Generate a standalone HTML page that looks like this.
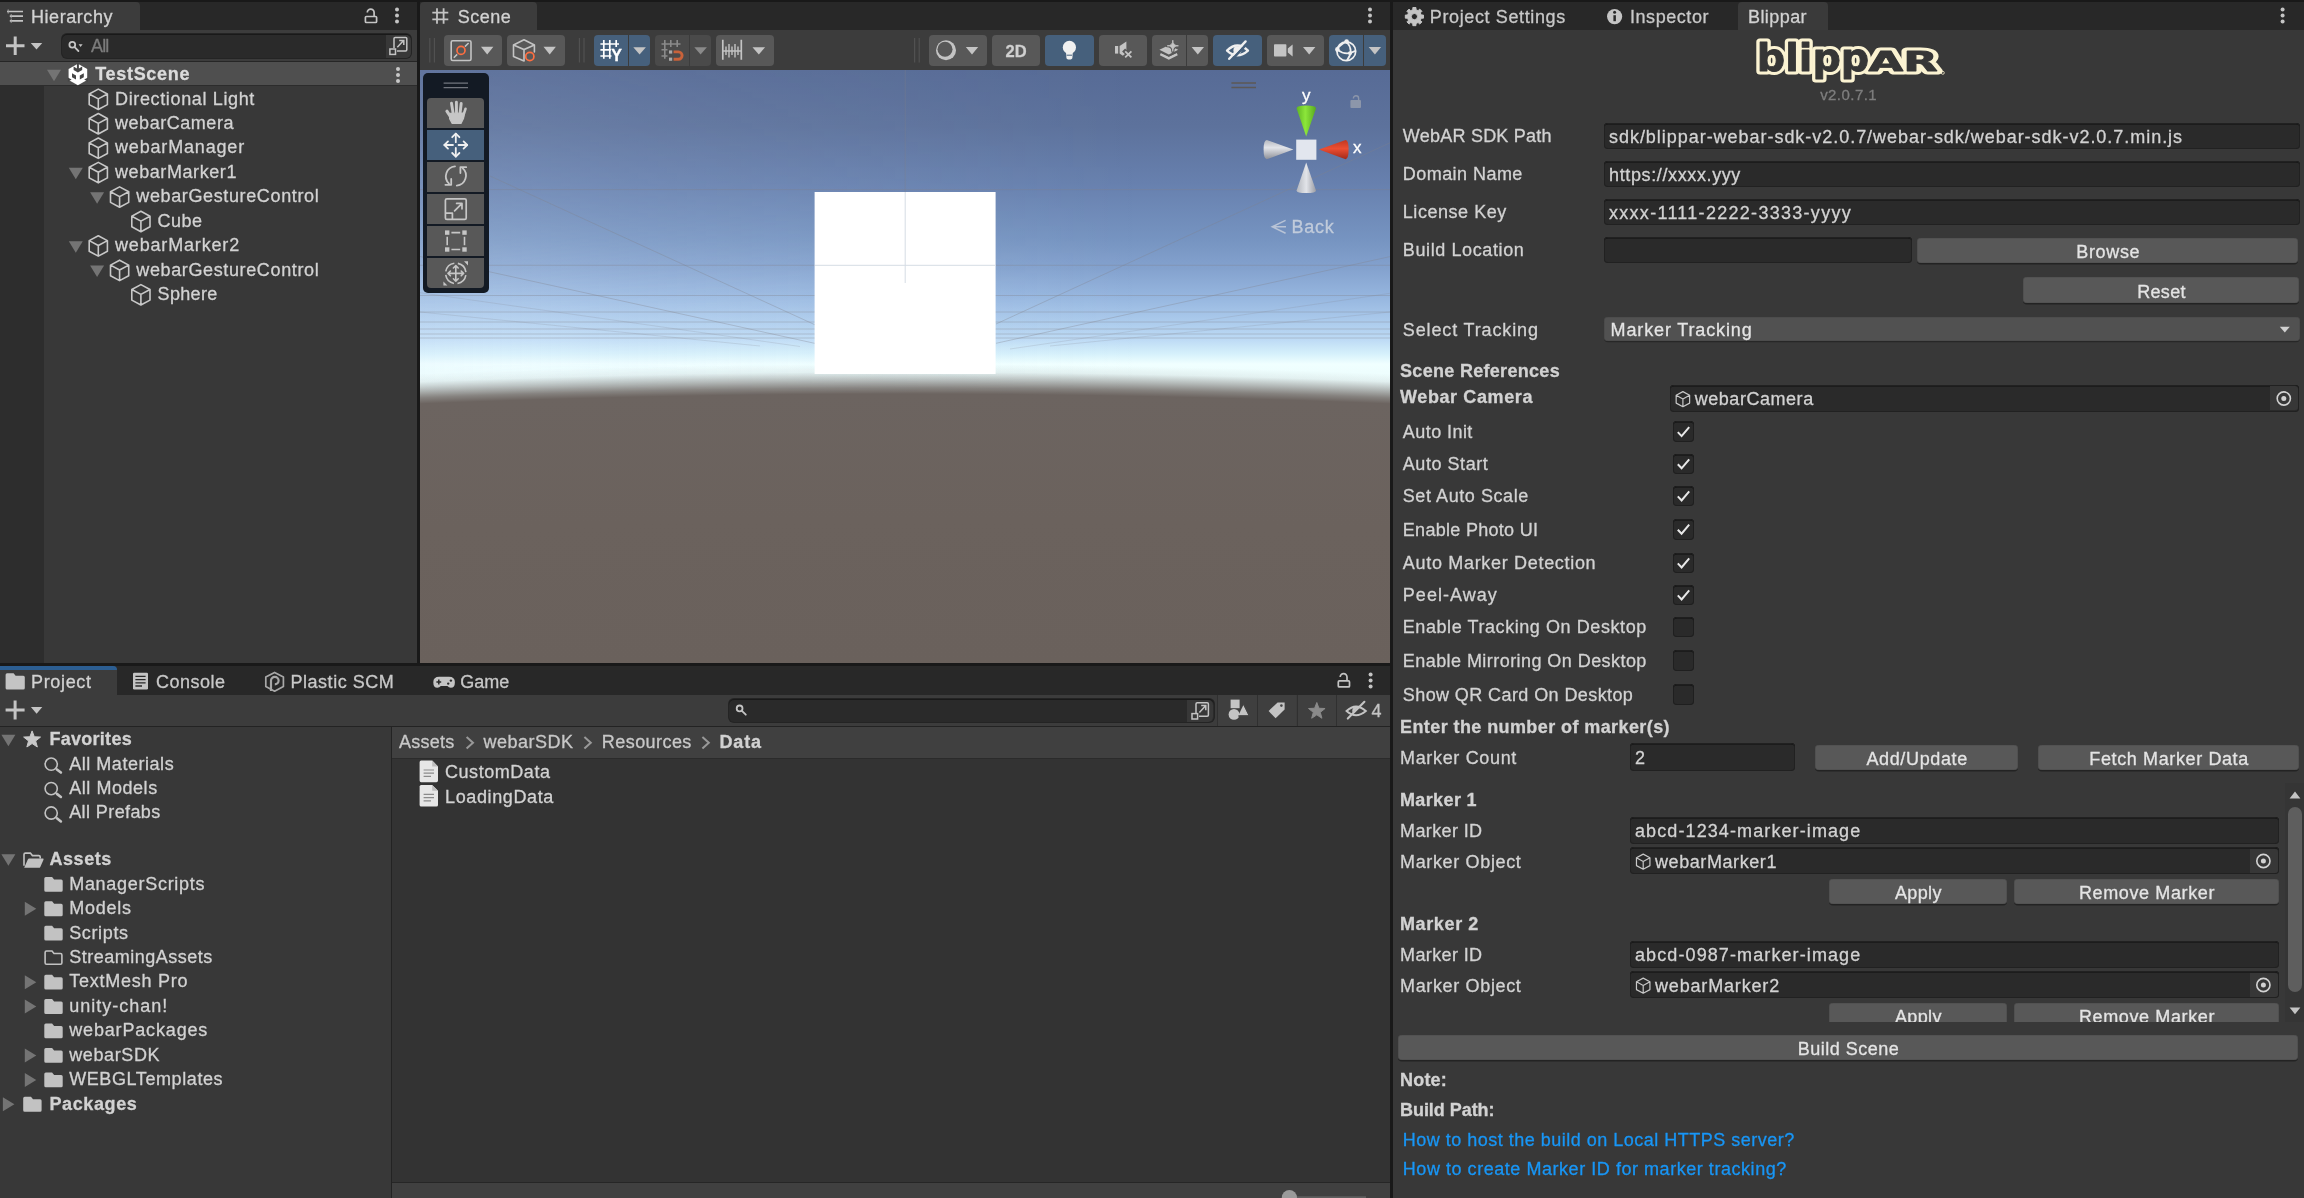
<!DOCTYPE html>
<html lang="en"><head><meta charset="utf-8"><title>Unity - Blippar WebAR SDK</title>
<style>
html,body{margin:0;padding:0}
body{width:2304px;height:1198px;overflow:hidden;background:#191919;position:relative;
 font-family:"Liberation Sans",sans-serif;font-size:18px;color:#D2D2D2;}
div,span,svg{position:absolute}
#L{left:0;top:0;width:2304px;height:1198px;will-change:transform}
span{white-space:pre;line-height:24px;height:24px;-webkit-text-stroke:0.3px currentColor}
#sky{background:radial-gradient(circle at 485px 12324px,rgba(106,97,92,1) 11731.0px,rgba(107,98,93,1) 11874.0px,rgba(108,100,96,1) 12000.0px,rgba(108,100,96,.80) 12006.0px,rgba(108,101,98,.46) 12013.5px,rgba(110,104,102,.09) 12022.0px,rgba(110,104,102,0) 12030.0px),linear-gradient(180deg,#576B96 0px,#5D729C 57px,#6780AE 113px,#7694C1 170px,#84A2CE 199px,#96B6DF 227px,#AFCEEE 255px,#BEDBF5 270px,#D6F1FB 284px,#F0FFFF 294px,#EEFEFE 302px,#EAFAFA 350px);}
svg{left:0;top:0;width:2304px;height:1198px;overflow:visible}
svg text{font-family:"Liberation Sans",sans-serif}
svg text.lg{font-family:"DejaVu Sans","Liberation Sans",sans-serif;font-weight:bold}
</style></head>
<body>
<div id="L">
<div style="left:0px;top:2px;width:417px;height:28px;background:#282828;"></div>
<div style="left:0px;top:2px;width:140px;height:28px;background:#3C3C3C;border-radius:0 4px 0 0;"></div>
<div style="left:0px;top:30px;width:417px;height:31px;background:#3C3C3C;"></div>
<div style="left:0px;top:61px;width:417px;height:1px;background:#262626;"></div>
<div style="left:0px;top:62px;width:417px;height:601px;background:#383838;"></div>
<div style="left:0px;top:62px;width:417px;height:23px;background:#4F4F4F;"></div>
<div style="left:0px;top:85px;width:417px;height:1px;background:#2C2C2C;"></div>
<div style="left:0px;top:86px;width:44px;height:577px;background:#2D2D2D;"></div>
<span style="left:31.00px;top:5.30px;letter-spacing:0.554px;">Hierarchy</span>
<div style="left:61.5px;top:34px;width:349.5px;height:23.5px;background:#2A2A2A;border-radius:5px;box-shadow:inset 0 1px 0 #191919, 0 0 0 1px #242424;"></div>
<div style="left:385.5px;top:35px;width:25.5px;height:22.5px;background:#383838;border-radius:0 5px 5px 0;"></div>
<span style="left:91.00px;top:34.20px;letter-spacing:-0.834px;color:#7C7C7C;">All</span>
<span style="left:95.20px;top:61.90px;letter-spacing:0.699px;font-weight:bold;color:#DCDCDC;">TestScene</span>
<span style="left:115.00px;top:86.50px;letter-spacing:0.643px;">Directional Light</span>
<span style="left:115.00px;top:110.94px;letter-spacing:0.541px;">webarCamera</span>
<span style="left:115.00px;top:135.38px;letter-spacing:0.828px;">webarManager</span>
<span style="left:115.00px;top:159.82px;letter-spacing:0.580px;">webarMarker1</span>
<span style="left:136.30px;top:184.26px;letter-spacing:0.627px;">webarGestureControl</span>
<span style="left:157.60px;top:208.70px;letter-spacing:0.492px;">Cube</span>
<span style="left:115.00px;top:233.14px;letter-spacing:0.830px;">webarMarker2</span>
<span style="left:136.30px;top:257.58px;letter-spacing:0.627px;">webarGestureControl</span>
<span style="left:157.60px;top:282.02px;letter-spacing:0.326px;">Sphere</span>
<div style="left:420px;top:2px;width:970px;height:28px;background:#282828;"></div>
<div style="left:420px;top:2px;width:117px;height:28px;background:#3C3C3C;border-radius:4px 4px 0 0;"></div>
<div style="left:420px;top:30px;width:970px;height:40px;background:#3C3C3C;"></div>
<span style="left:457.70px;top:5.30px;letter-spacing:0.492px;">Scene</span>
<div style="left:444.2px;top:35px;width:57.80000000000001px;height:30.5px;background:#585858;border-radius:4px;"></div>
<div style="left:507px;top:35px;width:58px;height:30.5px;background:#585858;border-radius:4px;"></div>
<div style="left:594px;top:35px;width:33.60000000000002px;height:30.5px;background:#46607C;border-radius:4px 0 0 4px;"></div>
<div style="left:629px;top:35px;width:21.399999999999977px;height:30.5px;background:#46607C;border-radius:0 4px 4px 0;"></div>
<span style="left:611.26px;top:43.50px;letter-spacing:0.000px;font-weight:bold;color:#FFFFFF;font-size:16px;">Y</span>
<div style="left:654.9px;top:35px;width:33.80000000000007px;height:30.5px;background:#4A4A4A;border-radius:4px 0 0 4px;"></div>
<div style="left:690px;top:35px;width:21.299999999999955px;height:30.5px;background:#4A4A4A;border-radius:0 4px 4px 0;"></div>
<div style="left:716px;top:35px;width:58px;height:30.5px;background:#585858;border-radius:4px;"></div>
<div style="left:929px;top:35px;width:58px;height:30.5px;background:#585858;border-radius:4px;"></div>
<div style="left:991.8px;top:35px;width:48.600000000000136px;height:30.5px;background:#585858;border-radius:4px;"></div>
<span style="left:1005.40px;top:39.30px;letter-spacing:0.100px;font-weight:bold;color:#D0D0D0;font-size:16.5px;">2D</span>
<div style="left:1045px;top:35px;width:49px;height:30.5px;background:#46607C;border-radius:4px;"></div>
<div style="left:1098.7px;top:35px;width:48.5px;height:30.5px;background:#585858;border-radius:4px;"></div>
<div style="left:1152px;top:35px;width:33.700000000000045px;height:30.5px;background:#585858;border-radius:4px 0 0 4px;"></div>
<div style="left:1187px;top:35px;width:21.200000000000045px;height:30.5px;background:#585858;border-radius:0 4px 4px 0;"></div>
<div style="left:1213px;top:35px;width:49px;height:30.5px;background:#46607C;border-radius:4px;"></div>
<div style="left:1266.5px;top:35px;width:57.90000000000009px;height:30.5px;background:#585858;border-radius:4px;"></div>
<div style="left:1329px;top:35px;width:33.59999999999991px;height:30.5px;background:#46607C;border-radius:4px 0 0 4px;"></div>
<div style="left:1364px;top:35px;width:21.700000000000045px;height:30.5px;background:#46607C;border-radius:0 4px 4px 0;"></div>
<div id="sky" style="left:420px;top:70px;width:970px;height:593px;"></div>
<div style="left:420px;top:70px;width:970px;height:325px;background:linear-gradient(90deg,rgba(228,242,255,.26) 0,rgba(228,242,255,.14) 30%,rgba(228,242,255,0) 74%);-webkit-mask-image:linear-gradient(180deg,rgba(0,0,0,.3) 0,rgba(0,0,0,.6) 45%,#000 75%,#000 90%,transparent 100%);mask-image:linear-gradient(180deg,rgba(0,0,0,.3) 0,rgba(0,0,0,.6) 45%,#000 75%,#000 90%,transparent 100%);"></div>
<svg viewBox="0 0 2304 1198" width="2304" height="1198"><g stroke="#80828A" stroke-opacity="0.34" stroke-width="1" fill="none"><path d="M905.2 70V283"/><path d="M420 189.6H1390"/><path d="M420 265.3H1390"/><path d="M420 295.5H1390"/><path d="M420 312H1390"/><path d="M420 322H1390"/><path d="M420 329H1390"/><path d="M420 334H1390"/><path d="M420 338H1390"/><path d="M490 176L815 324.8M1390 142.8L996 324M420 256.5L815 343.4M1390 256.6L996 343.3"/><path d="M420 292.7L800 346.5M1390 293.3L1010 349M420 312L760 346M1390 312L1050 346" stroke-opacity=".2"/></g><rect x="814.6" y="192" width="181" height="182" fill="#FFFFFF"/><path d="M905.2 192V283M815 265.3H996" stroke="#D5DCE4" stroke-width="1"/></svg>
<div style="left:423px;top:73px;width:66px;height:220px;background:#131A24;border-radius:5px;"></div>
<div style="left:427px;top:98px;width:57px;height:30px;background:#585858;border-radius:4px 4px 0 0;"></div>
<div style="left:427px;top:130px;width:57px;height:30px;background:#46607C;border-radius:0;"></div>
<div style="left:427px;top:162px;width:57px;height:30px;background:#585858;border-radius:0;"></div>
<div style="left:427px;top:194px;width:57px;height:30px;background:#585858;border-radius:0;"></div>
<div style="left:427px;top:226px;width:57px;height:30px;background:#585858;border-radius:0;"></div>
<div style="left:427px;top:258px;width:57px;height:30px;background:#585858;border-radius:0 0 4px 4px;"></div>
<span style="left:1301.95px;top:84.30px;letter-spacing:0.000px;color:#FFFFFF;font-size:17px;">y</span>
<span style="left:1352.95px;top:135.90px;letter-spacing:0.000px;color:#FFFFFF;font-size:17px;">x</span>
<span style="left:1291.40px;top:214.90px;letter-spacing:0.746px;color:rgba(200,208,222,.9);">Back</span>
<div style="left:1393px;top:2px;width:911px;height:28px;background:#282828;"></div>
<div style="left:1393px;top:30px;width:911px;height:1168px;background:#383838;"></div>
<div style="left:1738px;top:2px;width:90px;height:28px;background:#3A3A3A;border-radius:4px 4px 0 0;"></div>
<span style="left:1429.80px;top:5.30px;letter-spacing:0.621px;color:#C8C8C8;">Project Settings</span>
<span style="left:1630.00px;top:5.30px;letter-spacing:0.551px;color:#C8C8C8;">Inspector</span>
<span style="left:1748.00px;top:5.30px;letter-spacing:0.424px;">Blippar</span>
<span style="left:1820.13px;top:82.90px;letter-spacing:0.453px;color:#7E7E7E;font-size:15px;">v2.0.7.1</span>
<span style="left:1402.80px;top:124.10px;letter-spacing:0.233px;">WebAR SDK Path</span>
<div style="left:1604px;top:122.5px;width:695.5px;height:26.69999999999999px;background:#2A2A2A;border-radius:4px;box-shadow:inset 0 0 0 1px #212121, inset 0 1.5px 0 #0F0F0F;"></div>
<span style="left:1609.00px;top:124.55px;letter-spacing:0.965px;">sdk/blippar-webar-sdk-v2.0.7/webar-sdk/webar-sdk-v2.0.7.min.js</span>
<span style="left:1402.80px;top:162.10px;letter-spacing:0.451px;">Domain Name</span>
<div style="left:1604px;top:160.5px;width:695.5px;height:26.69999999999999px;background:#2A2A2A;border-radius:4px;box-shadow:inset 0 0 0 1px #212121, inset 0 1.5px 0 #0F0F0F;"></div>
<span style="left:1609.00px;top:162.55px;letter-spacing:0.623px;">https://xxxx.yyy</span>
<span style="left:1402.80px;top:200.10px;letter-spacing:0.540px;">License Key</span>
<div style="left:1604px;top:198.5px;width:695.5px;height:26.69999999999999px;background:#2A2A2A;border-radius:4px;box-shadow:inset 0 0 0 1px #212121, inset 0 1.5px 0 #0F0F0F;"></div>
<span style="left:1609.00px;top:200.55px;letter-spacing:1.288px;">xxxx-1111-2222-3333-yyyy</span>
<span style="left:1402.80px;top:238.30px;letter-spacing:0.608px;">Build Location</span>
<div style="left:1604px;top:236.5px;width:307.79999999999995px;height:26.69999999999999px;background:#2A2A2A;border-radius:4px;box-shadow:inset 0 0 0 1px #212121, inset 0 1.5px 0 #0F0F0F;"></div>
<div style="left:1917px;top:238px;width:381px;height:25px;background:#585858;border-radius:4px;box-shadow:0 1.5px 0 #232323, inset 0 0 0 0.6px #4C4C4C;"></div>
<span style="left:2076.23px;top:239.90px;letter-spacing:0.663px;color:#E4E4E4;">Browse</span>
<div style="left:2023px;top:277px;width:276px;height:26px;background:#585858;border-radius:4px;box-shadow:0 1.5px 0 #232323, inset 0 0 0 0.6px #4C4C4C;"></div>
<span style="left:2137.25px;top:279.75px;letter-spacing:0.296px;color:#E4E4E4;">Reset</span>
<span style="left:1402.80px;top:317.70px;letter-spacing:0.863px;">Select Tracking</span>
<div style="left:1604px;top:317px;width:696px;height:24px;background:#515151;border-radius:4px;box-shadow:0 1.3px 0 #272727, inset 0 0 0 0.6px #484848;"></div>
<span style="left:1610.60px;top:317.70px;letter-spacing:0.864px;color:#E4E4E4;">Marker Tracking</span>
<span style="left:1400.00px;top:358.90px;letter-spacing:0.307px;font-weight:bold;">Scene References</span>
<span style="left:1400.00px;top:385.10px;letter-spacing:0.606px;font-weight:bold;">Webar Camera</span>
<div style="left:1669.7px;top:384.7px;width:629.3px;height:26.899999999999977px;background:#2A2A2A;border-radius:4px;box-shadow:inset 0 0 0 1px #212121, inset 0 1.5px 0 #0F0F0F;"></div>
<span style="left:1694.70px;top:387.20px;letter-spacing:0.541px;">webarCamera</span>
<div style="left:2270px;top:386.2px;width:28px;height:24.19999999999999px;background:#373737;border-radius:0 3px 3px 0;"></div>
<span style="left:1402.80px;top:420.00px;letter-spacing:0.440px;">Auto Init</span>
<div style="left:1673.0px;top:421.3px;width:20.8px;height:20.8px;background:#2A2A2A;border-radius:4px;box-shadow:inset 0 0 0 1px #1F1F1F, inset 0 1.5px 0 #0F0F0F;"></div>
<span style="left:1402.80px;top:452.20px;letter-spacing:0.545px;">Auto Start</span>
<div style="left:1673.0px;top:453.5px;width:20.8px;height:20.8px;background:#2A2A2A;border-radius:4px;box-shadow:inset 0 0 0 1px #1F1F1F, inset 0 1.5px 0 #0F0F0F;"></div>
<span style="left:1402.80px;top:484.30px;letter-spacing:0.565px;">Set Auto Scale</span>
<div style="left:1673.0px;top:485.6px;width:20.8px;height:20.8px;background:#2A2A2A;border-radius:4px;box-shadow:inset 0 0 0 1px #1F1F1F, inset 0 1.5px 0 #0F0F0F;"></div>
<span style="left:1402.80px;top:517.60px;letter-spacing:0.294px;">Enable Photo UI</span>
<div style="left:1673.0px;top:518.9px;width:20.8px;height:20.8px;background:#2A2A2A;border-radius:4px;box-shadow:inset 0 0 0 1px #1F1F1F, inset 0 1.5px 0 #0F0F0F;"></div>
<span style="left:1402.80px;top:551.30px;letter-spacing:0.687px;">Auto Marker Detection</span>
<div style="left:1673.0px;top:552.6px;width:20.8px;height:20.8px;background:#2A2A2A;border-radius:4px;box-shadow:inset 0 0 0 1px #1F1F1F, inset 0 1.5px 0 #0F0F0F;"></div>
<span style="left:1402.80px;top:583.30px;letter-spacing:1.032px;">Peel-Away</span>
<div style="left:1673.0px;top:584.6px;width:20.8px;height:20.8px;background:#2A2A2A;border-radius:4px;box-shadow:inset 0 0 0 1px #1F1F1F, inset 0 1.5px 0 #0F0F0F;"></div>
<span style="left:1402.80px;top:615.30px;letter-spacing:0.572px;">Enable Tracking On Desktop</span>
<div style="left:1673.0px;top:616.6px;width:20.8px;height:20.8px;background:#2A2A2A;border-radius:4px;box-shadow:inset 0 0 0 1px #1F1F1F, inset 0 1.5px 0 #0F0F0F;"></div>
<span style="left:1402.80px;top:648.90px;letter-spacing:0.441px;">Enable Mirroring On Desktop</span>
<div style="left:1673.0px;top:650.2px;width:20.8px;height:20.8px;background:#2A2A2A;border-radius:4px;box-shadow:inset 0 0 0 1px #1F1F1F, inset 0 1.5px 0 #0F0F0F;"></div>
<span style="left:1402.80px;top:682.60px;letter-spacing:0.409px;">Show QR Card On Desktop</span>
<div style="left:1673.0px;top:683.9px;width:20.8px;height:20.8px;background:#2A2A2A;border-radius:4px;box-shadow:inset 0 0 0 1px #1F1F1F, inset 0 1.5px 0 #0F0F0F;"></div>
<span style="left:1400.00px;top:715.30px;letter-spacing:0.412px;font-weight:bold;">Enter the number of marker(s)</span>
<span style="left:1400.00px;top:745.90px;letter-spacing:0.664px;">Marker Count</span>
<div style="left:1630px;top:743.3px;width:164.5999999999999px;height:27.300000000000068px;background:#2A2A2A;border-radius:4px;box-shadow:inset 0 0 0 1px #212121, inset 0 1.5px 0 #0F0F0F;"></div>
<span style="left:1635.00px;top:745.65px;letter-spacing:0.600px;">2</span>
<div style="left:1815px;top:745px;width:203px;height:25px;background:#585858;border-radius:4px;box-shadow:0 1.5px 0 #232323, inset 0 0 0 0.6px #4C4C4C;"></div>
<span style="left:1866.42px;top:746.90px;letter-spacing:0.643px;color:#E4E4E4;">Add/Update</span>
<div style="left:2038px;top:745px;width:261px;height:25px;background:#585858;border-radius:4px;box-shadow:0 1.5px 0 #232323, inset 0 0 0 0.6px #4C4C4C;"></div>
<span style="left:2089.36px;top:746.90px;letter-spacing:0.615px;color:#E4E4E4;">Fetch Marker Data</span>
<span style="left:1400.00px;top:788.30px;letter-spacing:0.369px;font-weight:bold;">Marker 1</span>
<span style="left:1400.00px;top:819.30px;letter-spacing:0.388px;">Marker ID</span>
<div style="left:1630px;top:816.5px;width:648.5999999999999px;height:27.100000000000023px;background:#2A2A2A;border-radius:4px;box-shadow:inset 0 0 0 1px #212121, inset 0 1.5px 0 #0F0F0F;"></div>
<span style="left:1635.00px;top:818.75px;letter-spacing:1.101px;">abcd-1234-marker-image</span>
<span style="left:1400.00px;top:849.90px;letter-spacing:0.652px;">Marker Object</span>
<div style="left:1630px;top:847.3px;width:648.5999999999999px;height:26.700000000000045px;background:#2A2A2A;border-radius:4px;box-shadow:inset 0 0 0 1px #212121, inset 0 1.5px 0 #0F0F0F;"></div>
<span style="left:1655.00px;top:849.70px;letter-spacing:0.580px;">webarMarker1</span>
<div style="left:2249.6px;top:848.8px;width:28px;height:24.0px;background:#373737;border-radius:0 3px 3px 0;"></div>
<span style="left:1400.00px;top:912.30px;letter-spacing:0.619px;font-weight:bold;">Marker 2</span>
<span style="left:1400.00px;top:943.30px;letter-spacing:0.388px;">Marker ID</span>
<div style="left:1630px;top:940.5px;width:648.5999999999999px;height:27.100000000000023px;background:#2A2A2A;border-radius:4px;box-shadow:inset 0 0 0 1px #212121, inset 0 1.5px 0 #0F0F0F;"></div>
<span style="left:1635.00px;top:942.75px;letter-spacing:1.101px;">abcd-0987-marker-image</span>
<span style="left:1400.00px;top:973.90px;letter-spacing:0.652px;">Marker Object</span>
<div style="left:1630px;top:971.3px;width:648.5999999999999px;height:26.700000000000045px;background:#2A2A2A;border-radius:4px;box-shadow:inset 0 0 0 1px #212121, inset 0 1.5px 0 #0F0F0F;"></div>
<span style="left:1655.00px;top:973.70px;letter-spacing:0.830px;">webarMarker2</span>
<div style="left:2249.6px;top:972.8px;width:28px;height:24.0px;background:#373737;border-radius:0 3px 3px 0;"></div>
<div style="left:1829px;top:879px;width:178px;height:25px;background:#585858;border-radius:4px;box-shadow:0 1.5px 0 #232323, inset 0 0 0 0.6px #4C4C4C;"></div>
<span style="left:1894.90px;top:881.20px;letter-spacing:0.395px;color:#E4E4E4;">Apply</span>
<div style="left:2014px;top:879px;width:265px;height:25px;background:#585858;border-radius:4px;box-shadow:0 1.5px 0 #232323, inset 0 0 0 0.6px #4C4C4C;"></div>
<span style="left:2079.01px;top:881.20px;letter-spacing:0.613px;color:#E4E4E4;">Remove Marker</span>
<div style="left:1829px;top:1003px;width:178px;height:25px;background:#585858;border-radius:4px;box-shadow:0 1.5px 0 #232323, inset 0 0 0 0.6px #4C4C4C;"></div>
<span style="left:1894.90px;top:1004.80px;letter-spacing:0.395px;color:#E4E4E4;">Apply</span>
<div style="left:2014px;top:1003px;width:265px;height:25px;background:#585858;border-radius:4px;box-shadow:0 1.5px 0 #232323, inset 0 0 0 0.6px #4C4C4C;"></div>
<span style="left:2079.01px;top:1004.80px;letter-spacing:0.613px;color:#E4E4E4;">Remove Marker</span>
<div style="left:1393px;top:1022.4px;width:895px;height:12.4px;background:#383838;"></div>
<div style="left:2285px;top:783px;width:19px;height:239px;background:#353535;"></div>
<div style="left:2287.6px;top:807px;width:14.4px;height:184.6px;background:#5E5E5E;border-radius:7px;"></div>
<div style="left:1398px;top:1035px;width:900px;height:25px;background:#585858;border-radius:4px;box-shadow:0 1.5px 0 #232323, inset 0 0 0 0.6px #4C4C4C;"></div>
<span style="left:1797.70px;top:1037.10px;letter-spacing:0.494px;color:#E4E4E4;">Build Scene</span>
<span style="left:1400.00px;top:1067.50px;letter-spacing:0.202px;font-weight:bold;">Note:</span>
<span style="left:1400.00px;top:1098.30px;letter-spacing:-0.045px;font-weight:bold;">Build Path:</span>
<span style="left:1402.80px;top:1127.90px;letter-spacing:0.496px;color:#1896F6;">How to host the build on Local HTTPS server?</span>
<span style="left:1402.80px;top:1156.90px;letter-spacing:0.543px;color:#1896F6;">How to create Marker ID for marker tracking?</span>
<div style="left:0px;top:666px;width:1390px;height:29px;background:#282828;"></div>
<div style="left:0px;top:666px;width:117px;height:29px;background:#3C3C3C;border-radius:0 4px 0 0;"></div>
<div style="left:0px;top:666px;width:117px;height:4px;background:#2C5E92;border-radius:0 4px 0 0;"></div>
<div style="left:0px;top:695px;width:1390px;height:30.6px;background:#3C3C3C;"></div>
<div style="left:0px;top:725.6px;width:1390px;height:1px;background:#232323;"></div>
<div style="left:0px;top:726.6px;width:391px;height:471.4px;background:#383838;"></div>
<div style="left:391px;top:726px;width:1.2px;height:472px;background:#232323;"></div>
<div style="left:392.2px;top:726.6px;width:997.8px;height:471.4px;background:#333333;"></div>
<div style="left:392.2px;top:726.6px;width:997.8px;height:31.4px;background:#404040;"></div>
<div style="left:392.2px;top:758px;width:997.8px;height:1px;background:#2B2B2B;"></div>
<div style="left:392.2px;top:1183px;width:997.8px;height:15px;background:#404040;"></div>
<div style="left:392.2px;top:1182.4px;width:997.8px;height:1px;background:#262626;"></div>
<span style="left:31.00px;top:670.30px;letter-spacing:0.654px;">Project</span>
<span style="left:156.00px;top:670.30px;letter-spacing:0.494px;color:#C8C8C8;">Console</span>
<span style="left:290.40px;top:670.30px;letter-spacing:0.544px;color:#C8C8C8;">Plastic SCM</span>
<span style="left:460.20px;top:670.30px;letter-spacing:-0.004px;color:#C8C8C8;">Game</span>
<div style="left:729px;top:698.6px;width:484.6px;height:23.2px;background:#2A2A2A;border-radius:5px;box-shadow:inset 0 1px 0 #191919, 0 0 0 1px #242424;"></div>
<div style="left:1187.4px;top:699.6px;width:26px;height:22px;background:#383838;border-radius:0 5px 5px 0;"></div>
<div style="left:1218px;top:695px;width:38.59999999999991px;height:30.6px;background:#3F3F3F;box-shadow:-1px 0 0 #303030;"></div>
<div style="left:1257.8px;top:695px;width:38.600000000000136px;height:30.6px;background:#3F3F3F;box-shadow:-1px 0 0 #303030;"></div>
<div style="left:1297.6px;top:695px;width:38.40000000000009px;height:30.6px;background:#3F3F3F;box-shadow:-1px 0 0 #303030;"></div>
<div style="left:1337.2px;top:695px;width:52.799999999999955px;height:30.6px;background:#3F3F3F;box-shadow:-1px 0 0 #303030;"></div>
<span style="left:1371.60px;top:699.30px;letter-spacing:0.000px;color:#C4C4C4;">4</span>
<span style="left:49.40px;top:727.10px;letter-spacing:0.285px;font-weight:bold;">Favorites</span>
<span style="left:69.20px;top:751.54px;letter-spacing:0.537px;">All Materials</span>
<span style="left:69.20px;top:775.98px;letter-spacing:0.547px;">All Models</span>
<span style="left:69.20px;top:800.42px;letter-spacing:0.406px;">All Prefabs</span>
<span style="left:49.40px;top:846.90px;letter-spacing:0.577px;font-weight:bold;">Assets</span>
<span style="left:69.20px;top:871.70px;letter-spacing:0.710px;">ManagerScripts</span>
<span style="left:69.20px;top:896.14px;letter-spacing:0.746px;">Models</span>
<span style="left:69.20px;top:920.58px;letter-spacing:0.641px;">Scripts</span>
<span style="left:69.20px;top:945.02px;letter-spacing:0.496px;">StreamingAssets</span>
<span style="left:69.20px;top:969.46px;letter-spacing:0.747px;">TextMesh Pro</span>
<span style="left:69.20px;top:993.90px;letter-spacing:0.995px;">unity-chan!</span>
<span style="left:69.20px;top:1018.34px;letter-spacing:0.840px;">webarPackages</span>
<span style="left:69.20px;top:1042.78px;letter-spacing:0.621px;">webarSDK</span>
<span style="left:69.20px;top:1067.22px;letter-spacing:0.592px;">WEBGLTemplates</span>
<span style="left:49.40px;top:1091.66px;letter-spacing:0.617px;font-weight:bold;">Packages</span>
<span style="left:399.00px;top:730.30px;letter-spacing:0.264px;color:#C8C8C8;">Assets</span>
<span style="left:483.60px;top:730.30px;letter-spacing:0.496px;color:#C8C8C8;">webarSDK</span>
<span style="left:601.80px;top:730.30px;letter-spacing:0.440px;color:#C8C8C8;">Resources</span>
<span style="left:719.40px;top:730.30px;letter-spacing:0.896px;font-weight:bold;">Data</span>
<span style="left:445.00px;top:760.10px;letter-spacing:0.546px;">CustomData</span>
<span style="left:445.00px;top:784.70px;letter-spacing:0.629px;">LoadingData</span>
</div>
<svg viewBox="0 0 2304 1198" width="2304" height="1198">
<g stroke="#C4C4C4" stroke-width="1.7" fill="none"><path d="M7 11.5H23M9.8 16.1H23M9.8 20.8H23"/><path d="M8.2 9.4v4.2M11.2 14v4.2M11.2 18.7v4.2" stroke-width="0.9" stroke="#A8A8A8"/></g>
<g fill="none" stroke="#C4C4C4" stroke-width="1.7"><rect x="365.4" y="16.5" width="11.2" height="6" rx="1"/><path d="M374.1 16.5V12.6a3.4 3.4 0 0 0 -6.8 0"/></g>
<circle cx="397" cy="9.5" r="2" fill="#C4C4C4"/>
<circle cx="397" cy="15.5" r="2" fill="#C4C4C4"/>
<circle cx="397" cy="21.5" r="2" fill="#C4C4C4"/>
<path d="M6 45.7H24.5M15.2 36.6V55" stroke="#C4C4C4" stroke-width="3" fill="none"/>
<path d="M30.75 43.0h11.5l-5.75 6.6z" fill="#C4C4C4"/>
<g fill="none" stroke="#C4C4C4" stroke-width="1.8"><circle cx="72.3" cy="44.8" r="2.9"/><path d="M74.6 47.2L78.4 51" stroke-linecap="round"/></g><path d="M78.6 44.3h4l-2 2.8z" fill="#C4C4C4"/>
<g fill="none" stroke="#C4C4C4" stroke-width="1.5"><path d="M394 48V38.6q0-1.2 1.2-1.2H405.6q1.2 0 1.2 1.2V49.8q0 1.2-1.2 1.2H397"/><rect x="389.9" y="49" width="5.6" height="5.4"/><path d="M397.3 47.2L403.6 40.6M399.2 40.4H403.8V45"/></g>
<path d="M47 69.7h14l-7 11.5z" fill="#747474"/>
<circle cx="398" cy="69" r="2" fill="#C8C8C8"/>
<circle cx="398" cy="75" r="2" fill="#C8C8C8"/>
<circle cx="398" cy="81" r="2" fill="#C8C8C8"/>
<path d="M77.9 63.7L87.2 69.1V79.9L77.9 85.3L68.6 79.9V69.1Z" fill="#FFFFFF"/><g fill="#454545"><path d="M76.9 63H78.9V68.6L82.2 66.6V69.9L77.9 72.6L73.6 69.9V66.6L76.9 68.6Z"/><path d="M72 73.2L76 75.6V79.6L72 77.2Z"/><path d="M83.8 73.2L79.8 75.6V79.6L83.8 77.2Z"/><path d="M67.8 77.4L71.6 79.6L67.8 81.8Z"/><path d="M88 77.4L84.2 79.6L88 81.8Z"/></g>
<path d="M98.3 89.1L107.39999999999999 94.0V104.6L98.3 109.5L89.2 104.6V94.0Z M89.2 94.0L98.3 98.89999999999999L107.39999999999999 94.0 M98.3 98.89999999999999V109.5" fill="none" stroke="#C8C8C8" stroke-width="1.6" stroke-linejoin="round"/>
<path d="M98.3 113.53999999999999L107.39999999999999 118.44V129.04L98.3 133.94L89.2 129.04V118.44Z M89.2 118.44L98.3 123.33999999999999L107.39999999999999 118.44 M98.3 123.33999999999999V133.94" fill="none" stroke="#C8C8C8" stroke-width="1.6" stroke-linejoin="round"/>
<path d="M98.3 137.98000000000002L107.39999999999999 142.88000000000002V153.48L98.3 158.38L89.2 153.48V142.88000000000002Z M89.2 142.88000000000002L98.3 147.78000000000003L107.39999999999999 142.88000000000002 M98.3 147.78000000000003V158.38" fill="none" stroke="#C8C8C8" stroke-width="1.6" stroke-linejoin="round"/>
<path d="M98.3 162.42000000000002L107.39999999999999 167.32000000000002V177.92L98.3 182.82L89.2 177.92V167.32000000000002Z M89.2 167.32000000000002L98.3 172.22000000000003L107.39999999999999 167.32000000000002 M98.3 172.22000000000003V182.82" fill="none" stroke="#C8C8C8" stroke-width="1.6" stroke-linejoin="round"/>
<path d="M68.8 167.82000000000002h14l-7 11.5z" fill="#747474"/>
<path d="M119.6 186.86L128.7 191.76000000000002V202.35999999999999L119.6 207.26L110.5 202.35999999999999V191.76000000000002Z M110.5 191.76000000000002L119.6 196.66000000000003L128.7 191.76000000000002 M119.6 196.66000000000003V207.26" fill="none" stroke="#C8C8C8" stroke-width="1.6" stroke-linejoin="round"/>
<path d="M90.1 192.26000000000002h14l-7 11.5z" fill="#747474"/>
<path d="M140.9 211.3L150.0 216.20000000000002V226.79999999999998L140.9 231.7L131.8 226.79999999999998V216.20000000000002Z M131.8 216.20000000000002L140.9 221.10000000000002L150.0 216.20000000000002 M140.9 221.10000000000002V231.7" fill="none" stroke="#C8C8C8" stroke-width="1.6" stroke-linejoin="round"/>
<path d="M98.3 235.74000000000004L107.39999999999999 240.64000000000004V251.24000000000004L98.3 256.14000000000004L89.2 251.24000000000004V240.64000000000004Z M89.2 240.64000000000004L98.3 245.54000000000005L107.39999999999999 240.64000000000004 M98.3 245.54000000000005V256.14000000000004" fill="none" stroke="#C8C8C8" stroke-width="1.6" stroke-linejoin="round"/>
<path d="M68.8 241.14000000000004h14l-7 11.5z" fill="#747474"/>
<path d="M119.6 260.18000000000006L128.7 265.08000000000004V275.68000000000006L119.6 280.58000000000004L110.5 275.68000000000006V265.08000000000004Z M110.5 265.08000000000004L119.6 269.9800000000001L128.7 265.08000000000004 M119.6 269.9800000000001V280.58000000000004" fill="none" stroke="#C8C8C8" stroke-width="1.6" stroke-linejoin="round"/>
<path d="M90.1 265.58000000000004h14l-7 11.5z" fill="#747474"/>
<path d="M140.9 284.62000000000006L150.0 289.52000000000004V300.12000000000006L140.9 305.02000000000004L131.8 300.12000000000006V289.52000000000004Z M131.8 289.52000000000004L140.9 294.4200000000001L150.0 289.52000000000004 M140.9 294.4200000000001V305.02000000000004" fill="none" stroke="#C8C8C8" stroke-width="1.6" stroke-linejoin="round"/>
<path d="M437 8.3V23.7M443.6 8.3V23.7M432.3 12.7H448.3M432.3 19.3H448.3" stroke="#C4C4C4" stroke-width="1.8" fill="none"/>
<circle cx="1370" cy="9.5" r="2" fill="#C4C4C4"/>
<circle cx="1370" cy="15.5" r="2" fill="#C4C4C4"/>
<circle cx="1370" cy="21.5" r="2" fill="#C4C4C4"/>
<path d="M429.8 38V62.4M434.40000000000003 38V62.4" stroke="#515151" stroke-width="1.2"/>
<path d="M579.4 38V62.4M584.0 38V62.4" stroke="#515151" stroke-width="1.2"/>
<path d="M914.6 38V62.4M919.2 38V62.4" stroke="#515151" stroke-width="1.2"/>
<rect x="451.2" y="40.7" width="19.8" height="19.8" rx="1.5" fill="none" stroke="#C4C4C4" stroke-width="1.6"/><circle cx="461" cy="50.4" r="4" fill="none" stroke="#FF6E40" stroke-width="1.7"/><path d="M453.8 57.7L457.2 54.4M464.9 46.6L468.6 43" stroke="#C4C4C4" stroke-width="1.5"/>
<path d="M481.0 46.800000000000004h12.4l-6.2 7.6z" fill="#C4C4C4"/>
<path d="M534.4 52V45L524 39.8L513.5 45V56.5L524 61" fill="none" stroke="#C4C4C4" stroke-width="1.6" stroke-linejoin="round" stroke-linecap="round"/><path d="M513.5 45L524 49.6L534.4 45M524 49.6V61" fill="none" stroke="#C4C4C4" stroke-width="1.6"/><circle cx="529.8" cy="56.5" r="4.1" fill="#585858" stroke="#FF6E40" stroke-width="1.7"/>
<path d="M543.5 46.800000000000004h12.4l-6.2 7.6z" fill="#C4C4C4"/>
<g stroke="#FFFFFF" stroke-width="1.7" fill="none"><path d="M600.4 44H619M600.4 49.8H611M600.4 56H611.5M603.8 40V58.8M609.8 40V58.8M616.2 40V47"/></g>
<path d="M633.3000000000001 47.3h12.6l-6.3 7.2z" fill="#C4C4C4"/>
<g stroke="#8A8A8A" stroke-width="1.6" fill="none"><path d="M661.5 44H680.5M661.5 49.8H667.5M661.5 56H667.5M664.8 40V58.8M670.8 40V47M677.2 40V47"/></g><rect x="669" y="50.4" width="3.2" height="3.2" fill="#A8A8A8"/><rect x="669" y="57.6" width="3.2" height="3.2" fill="#A8A8A8"/><path d="M673.6 51.9H678.4a3.7 3.7 0 0 1 0 7.4H673.6" fill="none" stroke="#C8623A" stroke-width="2.9"/>
<path d="M694.3000000000001 47.3h12.6l-6.3 7.2z" fill="#8A8A8A"/>
<g stroke="#C4C4C4" fill="none"><path d="M722.8 39.7V59.7M741.3 39.7V59.7" stroke-width="1.7"/><path d="M722.8 51H741.3" stroke-width="1.5"/><path d="M726 46.5V55M729 44V57.5M732 46.5V55M735 44V57.5M738 46.5V55" stroke-width="1.4"/></g>
<path d="M752.5 47.3h12.6l-6.3 7.2z" fill="#C4C4C4"/>
<circle cx="946" cy="50.2" r="10" fill="#C4C4C4"/><circle cx="945" cy="49.2" r="7.5" fill="#585858"/>
<path d="M965.8 47.0h12.4l-6.2 7.6z" fill="#C4C4C4"/>
<g fill="#F0F0F0"><circle cx="1069.4" cy="47.4" r="6.6"/><path d="M1066.1 52h6.6v4.2h-6.6z"/><path d="M1066.4 55.4h6v2q0 2-3 2t-3-2z"/></g><path d="M1066.4 55.2h6" stroke="#46607C" stroke-width="1"/>
<g fill="#C4C4C4"><rect x="1115" y="46" width="3.2" height="7.6"/><path d="M1119.6 46L1126.4 41.6V58.2L1119.6 53.6Z"/></g><path d="M1123.6 50L1132.4 58.2M1132.4 50L1123.6 58.2" stroke="#585858" stroke-width="4.4"/><path d="M1125.2 51.4L1131.4 57.4M1131.4 51.4L1125.2 57.4" stroke="#C4C4C4" stroke-width="1.8"/>
<path d="M1160.4 54L1168.8 58.2L1177.2 54" fill="none" stroke="#C4C4C4" stroke-width="2.6"/><path d="M1159.4 49.8L1168.8 45.2L1178.2 49.8L1168.8 54.4Z" fill="#C4C4C4"/><path d="M1159.4 50.4L1168.8 55L1178.2 50.4" fill="none" stroke="#585858" stroke-width="1.2" transform="translate(0,1.2)"/><path d="M1172.8 40.199999999999996Q1172.8 45.8 1178.3999999999999 45.8Q1172.8 45.8 1172.8 51.4Q1172.8 45.8 1167.2 45.8Q1172.8 45.8 1172.8 40.199999999999996Z" fill="#585858" stroke="#585858" stroke-linejoin="round" stroke-width="3"/><path d="M1172.8 40.199999999999996Q1172.8 45.8 1178.3999999999999 45.8Q1172.8 45.8 1172.8 51.4Q1172.8 45.8 1167.2 45.8Q1172.8 45.8 1172.8 40.199999999999996Z" fill="#C4C4C4" stroke="#C4C4C4" stroke-linejoin="round" stroke-width="0.8"/>
<path d="M1191.6 47.0h12.4l-6.2 7.6z" fill="#C4C4C4"/>
<path d="M1227 50.6Q1237.4 40.4 1248 50.6Q1237.4 60 1227 50.6Z" fill="none" stroke="#F0F0F0" stroke-width="2.3" stroke-linejoin="round"/><circle cx="1237.4" cy="50.2" r="4" fill="#F0F0F0"/><path d="M1247.2 43.4L1231.2 60.4" stroke="#46607C" stroke-width="2.6"/><path d="M1245.6 41.4L1229.2 58.8" stroke="#F0F0F0" stroke-width="2.4" stroke-linecap="round"/>
<g fill="#C4C4C4"><rect x="1274" y="44.3" width="12.4" height="12.2" rx="0.8"/><path d="M1287.8 48.4L1292.6 44.4V56.4L1287.8 52.4Z"/></g>
<path d="M1303.0 47.0h12.4l-6.2 7.6z" fill="#C4C4C4"/>
<g fill="none" stroke="#F0F0F0" stroke-width="1.7"><circle cx="1346.3" cy="51.2" r="9.4"/><path d="M1346.6 41.8Q1354.6 51 1346.8 60.6M1337.2 49.6Q1346 56.4 1355.6 50.8M1346.6 41.8Q1339.4 45 1337.2 49.6"/></g><g fill="#F0F0F0"><circle cx="1346.6" cy="41.6" r="2.3"/><circle cx="1337.4" cy="49.4" r="2.3"/><circle cx="1350" cy="53.2" r="2"/></g>
<path d="M1368.7 47.0h12.4l-6.2 7.6z" fill="#C4C4C4"/>
<path d="M443.6 83.1H468M443.6 87.6H468" stroke="#72767E" stroke-width="1.3"/>
<path d="M1231.4 83H1256M1231.4 87.6H1256" stroke="#5C5856" stroke-width="1.5"/>
<g fill="#8C96AA"><rect x="1350.4" y="100" width="10.6" height="8" rx="1"/></g><path d="M1358.6 100V98.4a2.6 2.6 0 0 0-5.2 0" fill="none" stroke="#8C96AA" stroke-width="1.4"/>
<g stroke="#C6C6C6" stroke-linecap="round" fill="none"><path d="M453.3 114.5L451.5 103.2" stroke-width="2.9"/><path d="M456.5 113.5L456.4 102.3" stroke-width="2.9"/><path d="M459.9 114.5L461.2 103.5" stroke-width="2.9"/><path d="M462.8 117L465.5 108.8" stroke-width="2.6"/><path d="M452 119L446.9 111.2" stroke-width="3.1"/></g><path d="M450 113.4L464.2 113L463.6 118.2L461 123.5H452.2L449.6 118.6Z" fill="#C6C6C6" stroke="#C6C6C6" stroke-width="1.2" stroke-linejoin="round"/>
<g fill="none" stroke="#F0F0F0" stroke-width="1.8" stroke-linecap="round" stroke-linejoin="round"><path d="M455.8 133.6V142.2M455.8 148V156.6M444.4 145H453M458.6 145H467.2"/><path d="M452.2 137.2L455.8 133.6L459.4 137.2M452.2 153L455.8 156.6L459.4 153M448 141.4L444.4 145L448 148.6M463.6 141.4L467.2 145L463.6 148.6"/></g>
<g fill="none" stroke="#C6C6C6" stroke-width="1.8" stroke-linecap="round" stroke-linejoin="round"><path d="M455 166.4A10 10 0 0 0 449 183.6M456.8 185.6A10 10 0 0 0 462.6 168.2"/><path d="M460.4 173V167.2H466.2M451.2 179V184.8H445.4"/></g>
<g fill="none" stroke="#C6C6C6" stroke-width="1.7" stroke-linejoin="round"><rect x="445.4" y="198.8" width="20.8" height="20.6" rx="1.5"/><path d="M445.4 213.2H452.4V219.4"/><path d="M454.6 210.8L461.8 203.6M456.6 203.4H462V208.8" stroke-linecap="round"/></g>
<g fill="#C6C6C6"><rect x="445" y="230.4" width="4.4" height="4.4"/><rect x="462.3" y="230.4" width="4.4" height="4.4"/><rect x="445" y="247.3" width="4.4" height="4.4"/><rect x="462.3" y="247.3" width="4.4" height="4.4"/></g><path d="M451.4 232.6H460.2M451.4 249.5H460.2M447.2 236.8V245.2M464.5 236.8V245.2" stroke="#C6C6C6" stroke-width="1.6" fill="none"/>
<g fill="none" stroke="#C6C6C6" stroke-width="1.6" stroke-linecap="round" stroke-linejoin="round"><circle cx="455.8" cy="273.4" r="10.2" stroke-dasharray="12.4 3.62" stroke-dashoffset="-1.8" stroke-linecap="butt"/><path d="M455.8 265.6V281.2M448 273.4H463.6M453.4 268L455.8 265.6L458.2 268M453.4 278.8L455.8 281.2L458.2 278.8M450.4 271L448 273.4L450.4 275.8M461.2 271L463.6 273.4L461.2 275.8"/></g><path d="M464 261.2H468V265.4Z M443.4 281.6V285.6H447.4Z" fill="#C6C6C6"/>
<defs><linearGradient id="gG" x1="0" x2="1"><stop offset="0" stop-color="#5FB424"/><stop offset=".45" stop-color="#8CE63A"/><stop offset="1" stop-color="#58A820"/></linearGradient><linearGradient id="gR" y1="0" y2="1" x2="0"><stop offset="0" stop-color="#C03822"/><stop offset=".45" stop-color="#EC4E32"/><stop offset="1" stop-color="#A22A1A"/></linearGradient><linearGradient id="gL" y1="0" y2="1" x2="0"><stop offset="0" stop-color="#B4B7BE"/><stop offset=".4" stop-color="#E2E4E9"/><stop offset="1" stop-color="#8E9098"/></linearGradient><linearGradient id="gD" x1="0" x2="1"><stop offset="0" stop-color="#B4B7BE"/><stop offset=".5" stop-color="#E2E4E9"/><stop offset="1" stop-color="#9A9CA4"/></linearGradient></defs><path d="M1306.2 136.6L1296.6 108.4Q1296.6 105.6 1306.2 105.6Q1316 105.6 1316 108.4Z" fill="url(#gG)"/><path d="M1306.2 162.6L1296.6 190.4Q1296.6 193 1306.2 193Q1316 193 1316 190.4Z" fill="url(#gD)"/><path d="M1319 149.6L1345.6 140Q1348.6 140.4 1348.6 149.6Q1348.6 158.8 1345.6 159.2Z" fill="url(#gR)"/><path d="M1293.4 149.6L1266.8 140Q1263.6 140.4 1263.6 149.6Q1263.6 158.8 1266.8 159.2Z" fill="url(#gL)"/><rect x="1296.2" y="139.6" width="20.2" height="20.2" fill="#E2E6EE"/>
<path d="M1285.6 220.4L1272.2 226.8L1285.6 233.2M1272.2 226.8H1286" fill="none" stroke="#C4CCDA" stroke-opacity=".85" stroke-width="1.5"/>
<path d="M1423.47 15.04 L1423.47 18.16 L1421.22 18.20 L1420.35 20.29 L1421.91 21.91 L1419.71 24.11 L1418.09 22.55 L1416.00 23.42 L1415.96 25.67 L1412.84 25.67 L1412.80 23.42 L1410.71 22.55 L1409.09 24.11 L1406.89 21.91 L1408.45 20.29 L1407.58 18.20 L1405.33 18.16 L1405.33 15.04 L1407.58 15.00 L1408.45 12.91 L1406.89 11.29 L1409.09 9.09 L1410.71 10.65 L1412.80 9.78 L1412.84 7.53 L1415.96 7.53 L1416.00 9.78 L1418.09 10.65 L1419.71 9.09 L1421.91 11.29 L1420.35 12.91 L1421.22 15.00Z M1417.5 16.6a3.1 3.1 0 1 0 -6.2 0a3.1 3.1 0 1 0 6.2 0Z" fill="#C4C4C4" fill-rule="evenodd" stroke="#C4C4C4" stroke-width="1" stroke-linejoin="round"/>
<circle cx="1614.6" cy="16.6" r="7.6" fill="#C4C4C4"/><rect x="1613.4" y="15.2" width="2.5" height="6" fill="#282828"/><circle cx="1614.6" cy="12.2" r="1.5" fill="#282828"/>
<circle cx="2282.6" cy="9.5" r="2" fill="#C4C4C4"/>
<circle cx="2282.6" cy="15.5" r="2" fill="#C4C4C4"/>
<circle cx="2282.6" cy="21.5" r="2" fill="#C4C4C4"/>
<g font-family="'DejaVu Sans','Liberation Sans',sans-serif" font-weight="bold" stroke-linejoin="round"><g fill="#FBF3D2" stroke="#FBF3D2" stroke-width="7"><text class="lg" x="1756.8" y="70.9" font-size="37" textLength="112.4" lengthAdjust="spacingAndGlyphs">blipp</text><text class="lg" x="1868.6" y="70.9" font-size="26.8" textLength="69.2" lengthAdjust="spacingAndGlyphs">AR</text></g><g fill="#363636" stroke="#363636" stroke-width="0.8"><text class="lg" x="1756.8" y="70.9" font-size="37" textLength="112.4" lengthAdjust="spacingAndGlyphs">blipp</text><text class="lg" x="1868.6" y="70.9" font-size="26.8" textLength="69.2" lengthAdjust="spacingAndGlyphs">AR</text></g></g><circle cx="1942.8" cy="72.8" r="1.5" fill="none" stroke="#FBF3D2" stroke-width="0.8"/>
<path d="M2279.8 326.8h10l-5.0 5.6z" fill="#D0D0D0"/>
<path d="M1682.9 391.65199999999993L1689.634 395.2779999999999V403.12199999999996L1682.9 406.74799999999993L1676.1660000000002 403.12199999999996V395.2779999999999Z M1676.1660000000002 395.2779999999999L1682.9 398.90399999999994L1689.634 395.2779999999999 M1682.9 398.90399999999994V406.74799999999993" fill="none" stroke="#C8C8C8" stroke-width="1.2000000000000002" stroke-linejoin="round"/>
<circle cx="2283.8" cy="398.49999999999994" r="6.6" fill="none" stroke="#D2D2D2" stroke-width="1.6"/><circle cx="2283.8" cy="398.49999999999994" r="2.5" fill="#D2D2D2"/>
<path d="M1677.8000000000002 432.09999999999997L1681.6000000000001 436.09999999999997L1689.2 427.09999999999997" fill="none" stroke="#E8E8E8" stroke-width="2"/>
<path d="M1677.8000000000002 464.29999999999995L1681.6000000000001 468.29999999999995L1689.2 459.29999999999995" fill="none" stroke="#E8E8E8" stroke-width="2"/>
<path d="M1677.8000000000002 496.4L1681.6000000000001 500.4L1689.2 491.4" fill="none" stroke="#E8E8E8" stroke-width="2"/>
<path d="M1677.8000000000002 529.6999999999999L1681.6000000000001 533.6999999999999L1689.2 524.6999999999999" fill="none" stroke="#E8E8E8" stroke-width="2"/>
<path d="M1677.8000000000002 563.4L1681.6000000000001 567.4L1689.2 558.4" fill="none" stroke="#E8E8E8" stroke-width="2"/>
<path d="M1677.8000000000002 595.4L1681.6000000000001 599.4L1689.2 590.4" fill="none" stroke="#E8E8E8" stroke-width="2"/>
<path d="M1643.2 854.1519999999999L1649.934 857.7779999999999V865.622L1643.2 869.2479999999999L1636.4660000000001 865.622V857.7779999999999Z M1636.4660000000001 857.7779999999999L1643.2 861.4039999999999L1649.934 857.7779999999999 M1643.2 861.4039999999999V869.2479999999999" fill="none" stroke="#C8C8C8" stroke-width="1.2000000000000002" stroke-linejoin="round"/>
<circle cx="2263.4" cy="861.0" r="6.6" fill="none" stroke="#D2D2D2" stroke-width="1.6"/><circle cx="2263.4" cy="861.0" r="2.5" fill="#D2D2D2"/>
<path d="M1643.2 978.1519999999999L1649.934 981.7779999999999V989.622L1643.2 993.2479999999999L1636.4660000000001 989.622V981.7779999999999Z M1636.4660000000001 981.7779999999999L1643.2 985.4039999999999L1649.934 981.7779999999999 M1643.2 985.4039999999999V993.2479999999999" fill="none" stroke="#C8C8C8" stroke-width="1.2000000000000002" stroke-linejoin="round"/>
<circle cx="2263.4" cy="985.0" r="6.6" fill="none" stroke="#D2D2D2" stroke-width="1.6"/><circle cx="2263.4" cy="985.0" r="2.5" fill="#D2D2D2"/>
<path d="M2289.6 798.4H2300.4L2295 791.6Z M2289.6 1007.4H2300.4L2295 1014.2Z" fill="#C4C4C4"/>
<path d="M5.6 674.7q0-1.5 1.5-1.5h6.5l2 2.5h7.7q1.5 0 1.5 1.5v10.899999999999999q0 1.5-1.5 1.5h-16.2q-1.5 0-1.5-1.5z" fill="#C4C4C4"/>
<rect x="133" y="672.8" width="15" height="16.6" rx="1.2" fill="#C4C4C4"/><path d="M135.4 676.4H145.6M135.4 679.6H145.6M135.4 682.8H145.6M135.4 686H142" stroke="#282828" stroke-width="1.3"/>
<g fill="none" stroke="#A8A8A8" stroke-width="1.7" stroke-linejoin="round"><path d="M274.6 672.4L283.4 677V686.6L274.6 691.2L265.8 686.6V677Z"/><path d="M271 691V680.6a3.8 3.8 0 1 1 3.8 3.8" stroke-width="2.2"/></g>
<path d="M439.2 676.8H449Q454.9 676.8 454.9 682.3Q454.9 687.8 450.8 687.8Q448.8 687.8 447.4 686H440.8Q439.4 687.8 437.4 687.8Q433.3 687.8 433.3 682.3Q433.3 676.8 439.2 676.8Z" fill="#C4C4C4"/><path d="M438.8 679.6V684.4M436.4 682H441.2" stroke="#282828" stroke-width="1.5"/><circle cx="448.2" cy="683.6" r="1.2" fill="#282828"/><circle cx="450.9" cy="680.6" r="1.2" fill="#282828"/>
<g fill="none" stroke="#C4C4C4" stroke-width="1.7"><rect x="1338.3000000000002" y="680.9" width="11.2" height="6" rx="1"/><path d="M1347.0 680.9V677.0a3.4 3.4 0 0 0 -6.8 0"/></g>
<circle cx="1370.6" cy="674.5" r="2" fill="#C4C4C4"/>
<circle cx="1370.6" cy="680.5" r="2" fill="#C4C4C4"/>
<circle cx="1370.6" cy="686.5" r="2" fill="#C4C4C4"/>
<path d="M5.6 710H24.6M15.1 700.6V719.6" stroke="#C4C4C4" stroke-width="3" fill="none"/>
<path d="M30.900000000000002 707.1h11.4l-5.7 6.6z" fill="#C4C4C4"/>
<g fill="none" stroke="#C4C4C4" stroke-width="1.8"><circle cx="739.6" cy="708.4" r="2.9"/><path d="M741.9 710.8L745.8 714.7" stroke-linecap="round"/></g>
<g fill="none" stroke="#C4C4C4" stroke-width="1.5"><path d="M1196 713.4V704q0-1.2 1.2-1.2H1207.2q1.2 0 1.2 1.2V715q0 1.2-1.2 1.2H1199"/><rect x="1192" y="713.6" width="5.6" height="5.4"/><path d="M1199.4 712.4L1205.6 705.8M1201.2 705.6H1205.8V710.2"/></g>
<g fill="#C4C4C4"><rect x="1230.6" y="699.6" width="9" height="8.6"/><circle cx="1234" cy="714.4" r="5.4"/><path d="M1243.4 705L1248.4 715.2H1238.4Z"/></g><path d="M1243.4 703.4L1249.6 716H1238" fill="none" stroke="#444444" stroke-width="1.2"/>
<path d="M1268.6 711L1277.6 702.4H1284.6V709.6L1275.6 718.2Z" fill="#C4C4C4"/><circle cx="1281.4" cy="705.6" r="1.3" fill="#444444"/>
<polygon points="1316.80,702.50 1318.95,708.24 1325.07,708.51 1320.28,712.33 1321.91,718.24 1316.80,714.85 1311.69,718.24 1313.32,712.33 1308.53,708.51 1314.65,708.24" fill="#8A8A8A" stroke="#8A8A8A" stroke-width="1" stroke-linejoin="round"/>
<g fill="none" stroke="#C4C4C4" stroke-width="2" stroke-linecap="round"><path d="M1346.6 711Q1356 702.2 1365.8 711Q1356 719.4 1346.6 711Z"/><path d="M1364.4 701.8L1347.8 718.6" stroke-width="2.1"/></g><path d="M1352.2 710.8a3.9 3.9 0 0 1 5.8-3.5L1352.8 712.8A3.9 3.9 0 0 1 1352.2 710.8Z" fill="#C4C4C4"/>
<path d="M1.4000000000000004 734.6999999999999h14l-7 11.5z" fill="#747474"/>
<polygon points="32.10,730.90 34.30,736.78 40.56,737.05 35.66,740.96 37.33,747.00 32.10,743.54 26.87,747.00 28.54,740.96 23.64,737.05 29.90,736.78" fill="#C8C8C8" stroke="#C8C8C8" stroke-width="1" stroke-linejoin="round"/>
<g fill="none" stroke="#C2C2C2" stroke-linecap="round"><circle cx="51.199999999999996" cy="764.14" r="6.1" stroke-width="1.6"/><path d="M56.9 769.44L60.9 772.5400000000001" stroke-width="2.6"/></g>
<g fill="none" stroke="#C2C2C2" stroke-linecap="round"><circle cx="51.199999999999996" cy="788.5799999999999" r="6.1" stroke-width="1.6"/><path d="M56.9 793.88L60.9 796.98" stroke-width="2.6"/></g>
<g fill="none" stroke="#C2C2C2" stroke-linecap="round"><circle cx="51.199999999999996" cy="813.02" r="6.1" stroke-width="1.6"/><path d="M56.9 818.32L60.9 821.4200000000001" stroke-width="2.6"/></g>
<path d="M1.4000000000000004 854.3h14l-7 11.5z" fill="#747474"/>
<path d="M24.0 865.8V854.5q0-1.4 1.4-1.4h5l2 2.5h6.4q1.4 0 1.4 1.4v1.6" fill="none" stroke="#C2C2C2" stroke-width="1.6"/><path d="M24.2 867.8l3.6-8.3q.4-.9 1.4-.9h13.6q1.2 0 .7 1.1l-3.2 7.2q-.4.9-1.4.9z" fill="#C2C2C2"/>
<path d="M44.3 878.4q0-1.5 1.5-1.5h6.3l2 2.5h7.1q1.5 0 1.5 1.5v9.3q0 1.5-1.5 1.5h-15.399999999999999q-1.5 0-1.5-1.5z" fill="#C2C2C2"/>
<path d="M44.3 902.84q0-1.5 1.5-1.5h6.3l2 2.5h7.1q1.5 0 1.5 1.5v9.3q0 1.5-1.5 1.5h-15.399999999999999q-1.5 0-1.5-1.5z" fill="#C2C2C2"/>
<path d="M24.8 901.84l11.5 7l-11.5 7z" fill="#747474"/>
<path d="M44.3 927.28q0-1.5 1.5-1.5h6.3l2 2.5h7.1q1.5 0 1.5 1.5v9.3q0 1.5-1.5 1.5h-15.399999999999999q-1.5 0-1.5-1.5z" fill="#C2C2C2"/>
<path d="M45.099999999999994 952.4200000000001q0-1.4 1.4-1.4h5.5l2 2.5h6.5q1.4 0 1.4 1.4v7.9q0 1.4-1.4 1.4h-13.999999999999998q-1.4 0-1.4-1.4z" fill="none" stroke="#C2C2C2" stroke-width="1.6"/>
<path d="M44.3 976.16q0-1.5 1.5-1.5h6.3l2 2.5h7.1q1.5 0 1.5 1.5v9.3q0 1.5-1.5 1.5h-15.399999999999999q-1.5 0-1.5-1.5z" fill="#C2C2C2"/>
<path d="M24.8 975.16l11.5 7l-11.5 7z" fill="#747474"/>
<path d="M44.3 1000.6q0-1.5 1.5-1.5h6.3l2 2.5h7.1q1.5 0 1.5 1.5v9.3q0 1.5-1.5 1.5h-15.399999999999999q-1.5 0-1.5-1.5z" fill="#C2C2C2"/>
<path d="M24.8 999.6l11.5 7l-11.5 7z" fill="#747474"/>
<path d="M44.3 1025.04q0-1.5 1.5-1.5h6.3l2 2.5h7.1q1.5 0 1.5 1.5v9.3q0 1.5-1.5 1.5h-15.399999999999999q-1.5 0-1.5-1.5z" fill="#C2C2C2"/>
<path d="M44.3 1049.48q0-1.5 1.5-1.5h6.3l2 2.5h7.1q1.5 0 1.5 1.5v9.3q0 1.5-1.5 1.5h-15.399999999999999q-1.5 0-1.5-1.5z" fill="#C2C2C2"/>
<path d="M24.8 1048.48l11.5 7l-11.5 7z" fill="#747474"/>
<path d="M44.3 1073.92q0-1.5 1.5-1.5h6.3l2 2.5h7.1q1.5 0 1.5 1.5v9.3q0 1.5-1.5 1.5h-15.399999999999999q-1.5 0-1.5-1.5z" fill="#C2C2C2"/>
<path d="M24.8 1072.92l11.5 7l-11.5 7z" fill="#747474"/>
<path d="M2.9000000000000004 1097.36l11.5 7l-11.5 7z" fill="#747474"/>
<path d="M23.2 1098.36q0-1.5 1.5-1.5h6.3l2 2.5h7.1q1.5 0 1.5 1.5v9.3q0 1.5-1.5 1.5h-15.399999999999999q-1.5 0-1.5-1.5z" fill="#C2C2C2"/>
<path d="M466.6 737L473.0 742.8L466.6 748.6" fill="none" stroke="#989898" stroke-width="2"/>
<path d="M584.4 737L590.8000000000001 742.8L584.4 748.6" fill="none" stroke="#989898" stroke-width="2"/>
<path d="M702.4 737L708.8000000000001 742.8L702.4 748.6" fill="none" stroke="#989898" stroke-width="2"/>
<path d="M421.20000000000005 760.6H432.20000000000005L438.0 766.4V780.6q0 1.6-1.6 1.6H421.20000000000005q-1.6 0-1.6-1.6V762.2q0-1.6 1.6-1.6Z" fill="#E6E6E6"/><path d="M432.20000000000005 760.6V766.4H438.0" fill="#BDBDBD"/><path d="M423.6 770.0H434.0M423.6 773.2H434.0M423.6 776.4H431.0" stroke="#8A8A8A" stroke-width="1.2"/>
<path d="M421.20000000000005 785H432.20000000000005L438.0 790.8V805q0 1.6-1.6 1.6H421.20000000000005q-1.6 0-1.6-1.6V786.6q0-1.6 1.6-1.6Z" fill="#E6E6E6"/><path d="M432.20000000000005 785V790.8H438.0" fill="#BDBDBD"/><path d="M423.6 794.4H434.0M423.6 797.6H434.0M423.6 800.8H431.0" stroke="#8A8A8A" stroke-width="1.2"/>
<path d="M1296 1197.2H1366" stroke="#5E5E5E" stroke-width="2"/><circle cx="1289.4" cy="1197.6" r="7.6" fill="#9A9A9A"/>
</svg>
</body></html>
